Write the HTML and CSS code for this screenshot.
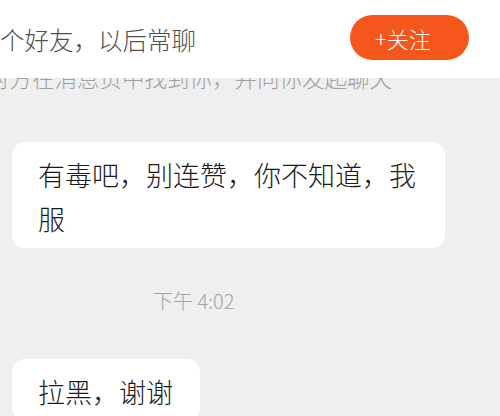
FILE: index.html
```html
<!DOCTYPE html>
<html lang="zh-CN">
<head>
    <meta charset="UTF-8">
    <meta name="viewport" content="width=device-width, initial-scale=1.0">
    <title>聊天</title>
    <link rel="stylesheet" href="styles.css">
</head>
<body>
    <!-- 顶部提示条 -->
    <div class="topbar">
        <span class="topbar-text">个好友，以后常聊</span>
        <button class="follow-btn">+关注</button>
    </div>

    <!-- 被顶部遮住一半的提示 -->
    <div class="hint">对方在消息页中找到你，并向你发起聊天</div>

    <!-- 消息列表 -->
    <div class="chat">
        <div class="bubble">有毒吧，别连赞，你不知道，我服</div>
        <div class="time">下午 4:02</div>
        <div class="bubble bubble-second">拉黑，谢谢</div>
    </div>
</body>
</html>
```

FILE: styles.css
```css
body {
    margin: 0;
    background-color: #efefef;
    font-family: "Noto Sans CJK SC", "Noto Sans", sans-serif;
    font-weight: 300;
    overflow: hidden;
    height: 416px;
}
.topbar {
    position: relative;
    z-index: 1;
    height: 78px;
    background-color: #fff;
    display: flex;
    align-items: center;
    justify-content: space-between;
    padding-right: 31px;
}
.topbar-text {
    font-size: 24.5px;
    color: #505050;
    white-space: nowrap;
}
.follow-btn {
    width: 119px;
    height: 45px;
    margin-bottom: 3px;
    border: none;
    border-radius: 23px;
    background-color: #f4561c;
    color: #fff;
    font-family: inherit;
    font-weight: 300;
    font-size: 22px;
    text-align: left;
    padding: 0 0 0 25px;
}
.hint {
    margin-top: -16px;
    margin-left: -13px;
    font-size: 22.5px;
    line-height: 30px;
    color: #a0a0a0;
    white-space: nowrap;
}
.chat {
    padding-top: 50px;
}
.bubble {
    width: fit-content;
    max-width: 380px;
    margin-left: 12px;
    padding: 11px 27px 7px 26px;
    background-color: #fff;
    border-radius: 13px;
    font-size: 27px;
    line-height: 44px;
    color: #1c1c1c;
}
.time {
    margin: 40px 0 0 153px;
    font-size: 20px;
    line-height: 26px;
    color: #a4a4a4;
}
.bubble-second {
    margin-top: 45px;
}
```
